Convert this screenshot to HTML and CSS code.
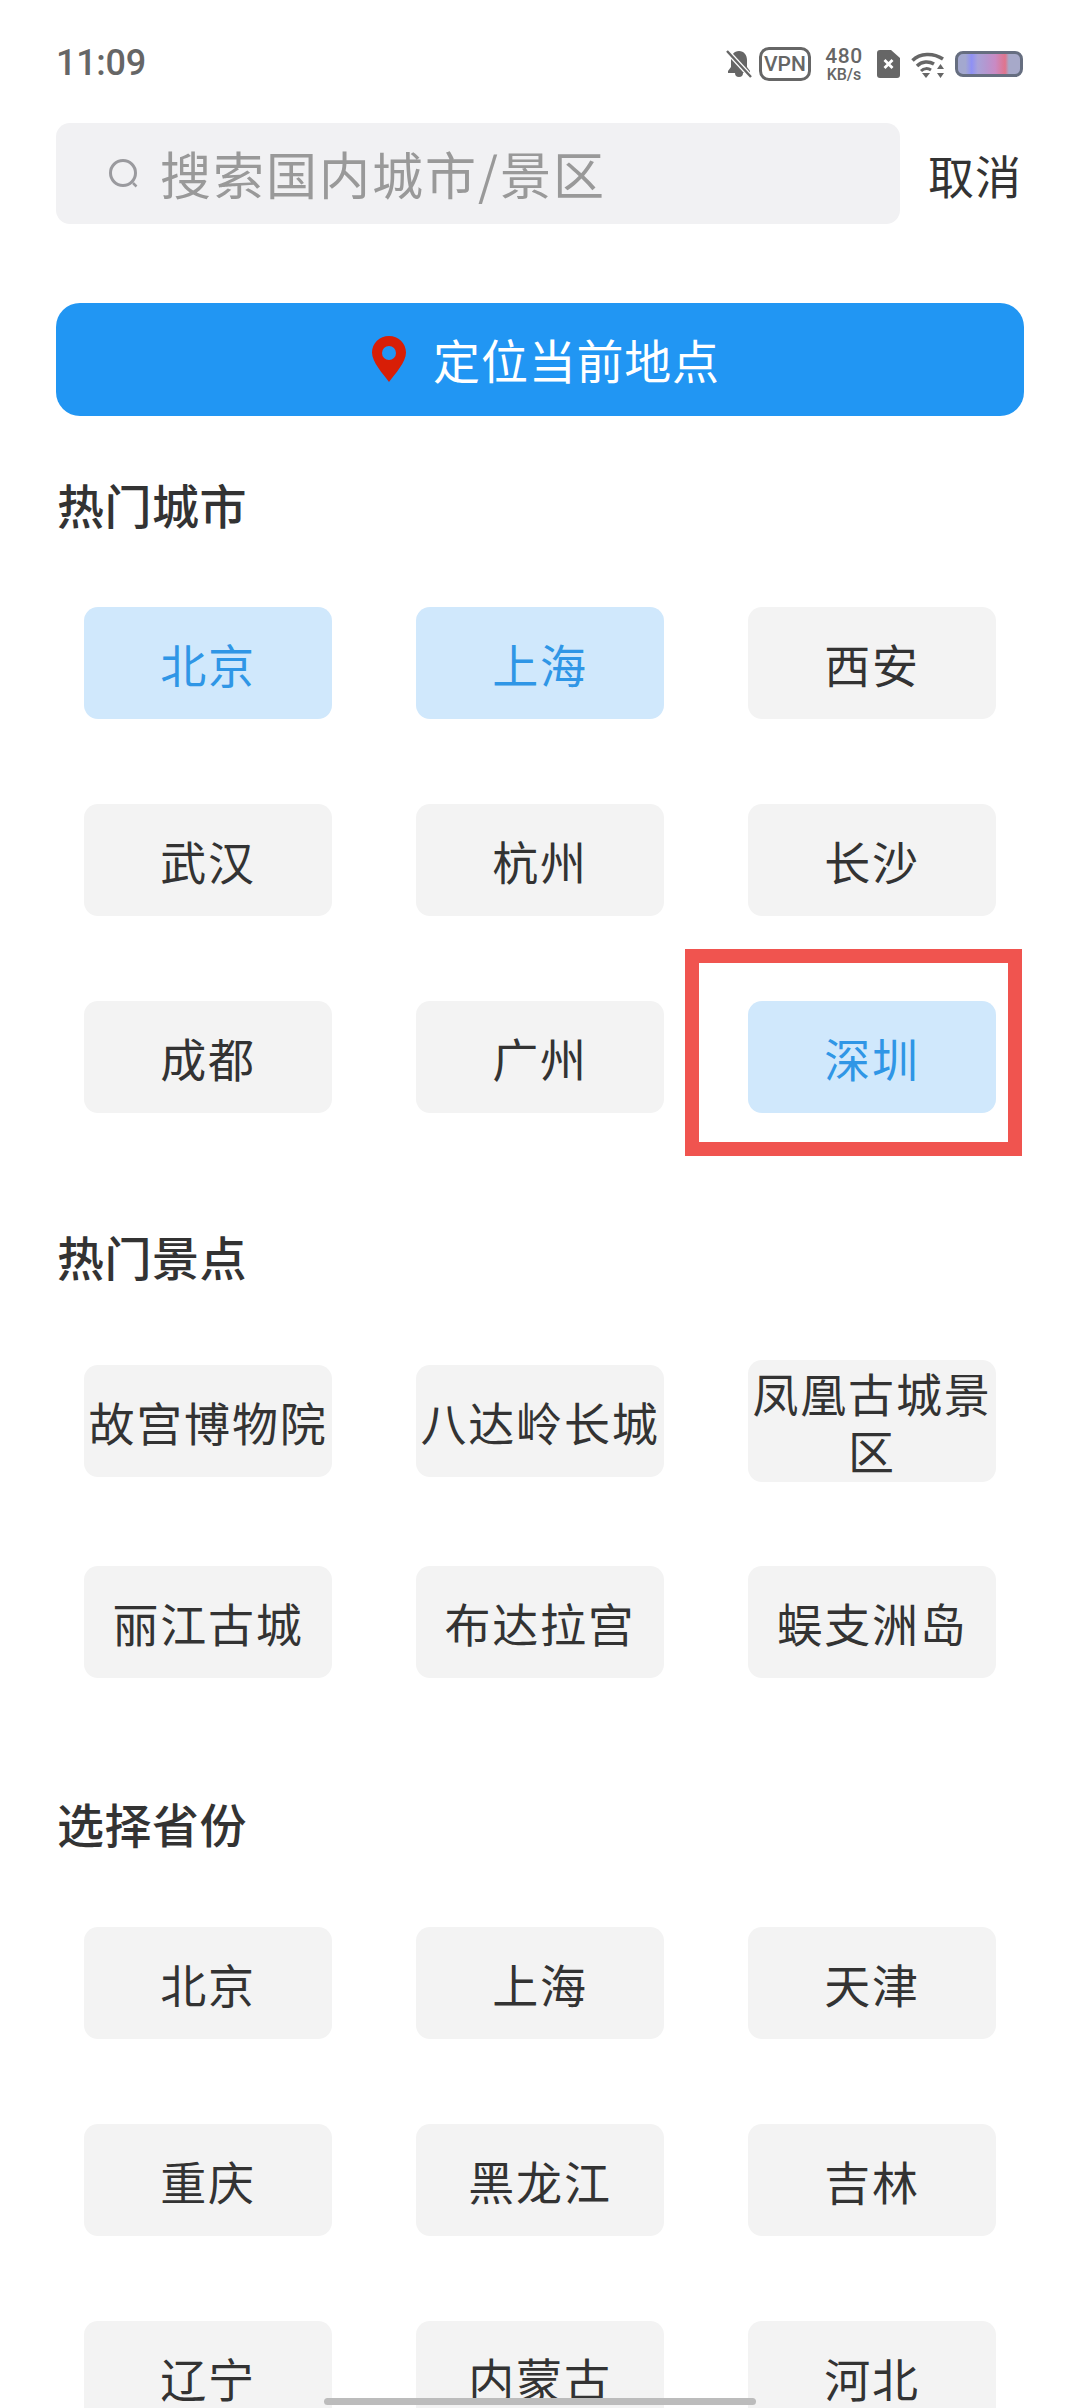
FILE: index.html
```html
<!DOCTYPE html>
<html lang="zh-CN">
<head>
<meta charset="utf-8">
<title>选择城市</title>
<link rel="stylesheet" href="styles.css">
</head>
<body>
<div class="page">
  <header class="status">
    <span class="time">11:09</span>
    <div class="status-icons">
      <svg class="ic-bell" viewBox="0 0 26 28"><path d="M13 1c-5 0-8 4-8 9v7l-3 4v2h7a4 4 0 0 0 8 0h7v-2l-3-4v-7c0-5-3-9-8-9z" fill="#666"/><path d="M1 1l24 26" stroke="#fff" stroke-width="5"/><path d="M1 1l24 26" stroke="#666" stroke-width="2.4"/></svg>
      <span class="vpn">VPN</span>
      <span class="speed"><span class="speed-num">480</span><span class="speed-unit">KB/s</span></span>
      <svg class="ic-sim" viewBox="0 0 23 28"><path d="M3 0h11l9 8v17a3 3 0 0 1-3 3H3a3 3 0 0 1-3-3V3a3 3 0 0 1 3-3z" fill="#666"/><path d="M7.5 10l8 8M15.500 10l-8 8" stroke="#fff" stroke-width="2.800"/></svg>
      <svg class="ic-wifi" viewBox="0 0 34 28"><path d="M1.500 10.500C9 3 22 2.500 32 9" fill="none" stroke="#666" stroke-width="3.500"/><path d="M6 16c5-5 12-5 17-2" fill="none" stroke="#666" stroke-width="3.500"/><path d="M10 21c3-3 7-3 10-1" fill="none" stroke="#666" stroke-width="3"/><path d="M11 23h8l-4 5z" fill="#666"/><path d="M29.500 14l3.500 5h-7zM29.500 28l-3.500-5h7z" fill="#666"/></svg>
      <span class="battery"></span>
    </div>
  </header>

  <div class="search-row">
    <div class="search">
      <svg class="ic-search" viewBox="0 0 32 32"><circle cx="15" cy="15" r="12.500" fill="none" stroke="#9a9a9e" stroke-width="3"/><path d="M25 25l3.500 3.500" stroke="#9a9a9e" stroke-width="2.500"/></svg>
      <span class="placeholder">搜索国内城市/景区</span>
    </div>
    <span class="cancel">取消</span>
  </div>

  <button class="locate">
    <svg class="ic-pin" viewBox="0 0 34 46"><path d="M17 0C7.600 0 0 7.400 0 16.500 0 26 11 38 17 46c6-8 17-20 17-29.500C34 7.400 26.400 0 17 0z" fill="#d81e06"/><circle cx="17" cy="17" r="7" fill="#2196f3"/></svg>
    <span>定位当前地点</span>
  </button>

  <section class="sec sec-cities">
    <h2 class="title">热门城市</h2>
    <div class="grid">
      <div class="chip on">北京</div>
      <div class="chip on">上海</div>
      <div class="chip">西安</div>
      <div class="chip">武汉</div>
      <div class="chip">杭州</div>
      <div class="chip">长沙</div>
      <div class="chip">成都</div>
      <div class="chip">广州</div>
      <div class="chip on">深圳<span class="mark"></span></div>
    </div>
  </section>

  <section class="sec sec-spots">
    <h2 class="title">热门景点</h2>
    <div class="grid">
      <div class="chip">故宫博物院</div>
      <div class="chip">八达岭长城</div>
      <div class="chip">凤凰古城景区</div>
      <div class="chip">丽江古城</div>
      <div class="chip">布达拉宫</div>
      <div class="chip">蜈支洲岛</div>
    </div>
  </section>

  <section class="sec sec-prov">
    <h2 class="title">选择省份</h2>
    <div class="grid">
      <div class="chip">北京</div>
      <div class="chip">上海</div>
      <div class="chip">天津</div>
      <div class="chip">重庆</div>
      <div class="chip">黑龙江</div>
      <div class="chip">吉林</div>
      <div class="chip">辽宁</div>
      <div class="chip">内蒙古</div>
      <div class="chip">河北</div>
    </div>
  </section>

  <div class="home-bar"></div>
</div>
</body>
</html>
```
FILE: styles.css
```css
* { box-sizing: border-box; }
html, body { margin: 0; padding: 0; }
body {
  background: #fff;
  font-family: "Noto Sans CJK SC", "Noto Sans", sans-serif;
  color: #333;
}
.page {
  position: relative;
  width: 1080px;
  height: 2408px;
  overflow: hidden;
  background: #fff;
}
.status {
  height: 123px;
  padding: 44px 57px 0 56px;
  display: flex;
  justify-content: space-between;
  align-items: flex-start;
  color: #666;
}
.time {
  font-family: Roboto, sans-serif;
  font-size: 36px;
  font-weight: 500;
  line-height: 38px;
  letter-spacing: -0.3px;
}
.status-icons {
  display: flex;
  align-items: center;
  height: 40px;
  margin-top: 0;
}
.ic-bell { width: 26px; height: 28px; margin-right: 7px; }
.vpn {
  width: 52px;
  height: 34px;
  border: 3px solid #666;
  border-radius: 10px;
  font: 500 21px/28px Roboto, sans-serif;
  text-align: center;
  margin-right: 13px;
}
.speed {
  display: flex;
  flex-direction: column;
  align-items: center;
  width: 40px;
  margin-right: 13px;
  font-family: Roboto, sans-serif;
  font-weight: 500;
}
.speed-num { font-size: 21px; line-height: 21px; letter-spacing: 0.5px; }
.speed-unit { font-size: 16px; line-height: 16px; }
.ic-sim { width: 23px; height: 28px; margin-right: 11px; }
.ic-wifi { width: 34px; height: 28px; margin-right: 10px; }
.battery {
  width: 68px;
  height: 26px;
  border: 3px solid #666e80;
  border-radius: 8px;
  background: linear-gradient(90deg, #a3a8cf 0, #a3a8cf 12%, #8f90f5 22%, #a9a2d8 32%, #b497d0 45%, #c98ac4 60%, #e0748c 76%, #a7a9c9 82%, #a7a9c9 100%);
}
.search-row {
  display: flex;
  align-items: center;
  padding: 0 58px 0 56px;
}
.search {
  width: 844px;
  height: 101px;
  background: #f1f1f3;
  border-radius: 14px;
  display: flex;
  align-items: center;
  padding-left: 52px;
}
.ic-search { width: 32px; height: 32px; margin-right: 20px; }
.placeholder {
  font-size: 51px;
  color: #999;
  letter-spacing: 2px;
  white-space: nowrap;
  position: relative;
  top: -1px;
}
.cancel { margin-left: auto; font-size: 46px; letter-spacing: 1px; color: #333; }
.locate {
  display: flex;
  align-items: center;
  justify-content: center;
  width: 968px;
  height: 113px;
  margin: 79px 0 0 56px;
  border: 0;
  border-radius: 24px;
  background: #2196f3;
  color: #fff;
  font-family: inherit;
  font-size: 47px;
  letter-spacing: 0.8px;
  line-height: 60px;
  padding: 0 0 2px 4px;
}
.ic-pin { width: 34px; height: 46px; margin-right: 27px; margin-left: 8px; }
.title {
  margin: 0 0 0 57px;
  font-size: 47px;
  font-weight: 500;
  letter-spacing: 0.5px;
  line-height: 60px;
  color: #333;
}
.sec-cities { margin-top: 58px; }
.sec-spots { margin-top: 113px; }
.sec-prov { margin-top: 115px; }
.sec-cities .title { margin-bottom: 73px; }
.sec-spots .title { margin-bottom: 74px; }
.sec-prov .title { margin-bottom: 74px; }
.grid {
  display: grid;
  grid-template-columns: repeat(3, 248px);
  column-gap: 84px;
  row-gap: 85px;
  padding-left: 84px;
  align-items: center;
}
.sec-spots .grid { row-gap: 84px; }
.chip {
  position: relative;
  min-height: 112px;
  padding: 4px 0;
  display: flex;
  align-items: center;
  justify-content: center;
  text-align: center;
  background: #f3f3f3;
  border-radius: 14px;
  font-size: 46px;
  line-height: 57px;
  letter-spacing: 1.800px;
  color: #333;
}
.chip.on { background: #d0e8fc; color: #2f96e6; }
.mark {
  position: absolute;
  top: -52px;
  bottom: -43px;
  left: -63px;
  right: -26px;
  border: 14px solid #f0544f;
}
.home-bar {
  position: absolute;
  left: 324px;
  top: 2398px;
  width: 432px;
  height: 7px;
  border-radius: 4px;
  background: #bcbcbc;
}
```
